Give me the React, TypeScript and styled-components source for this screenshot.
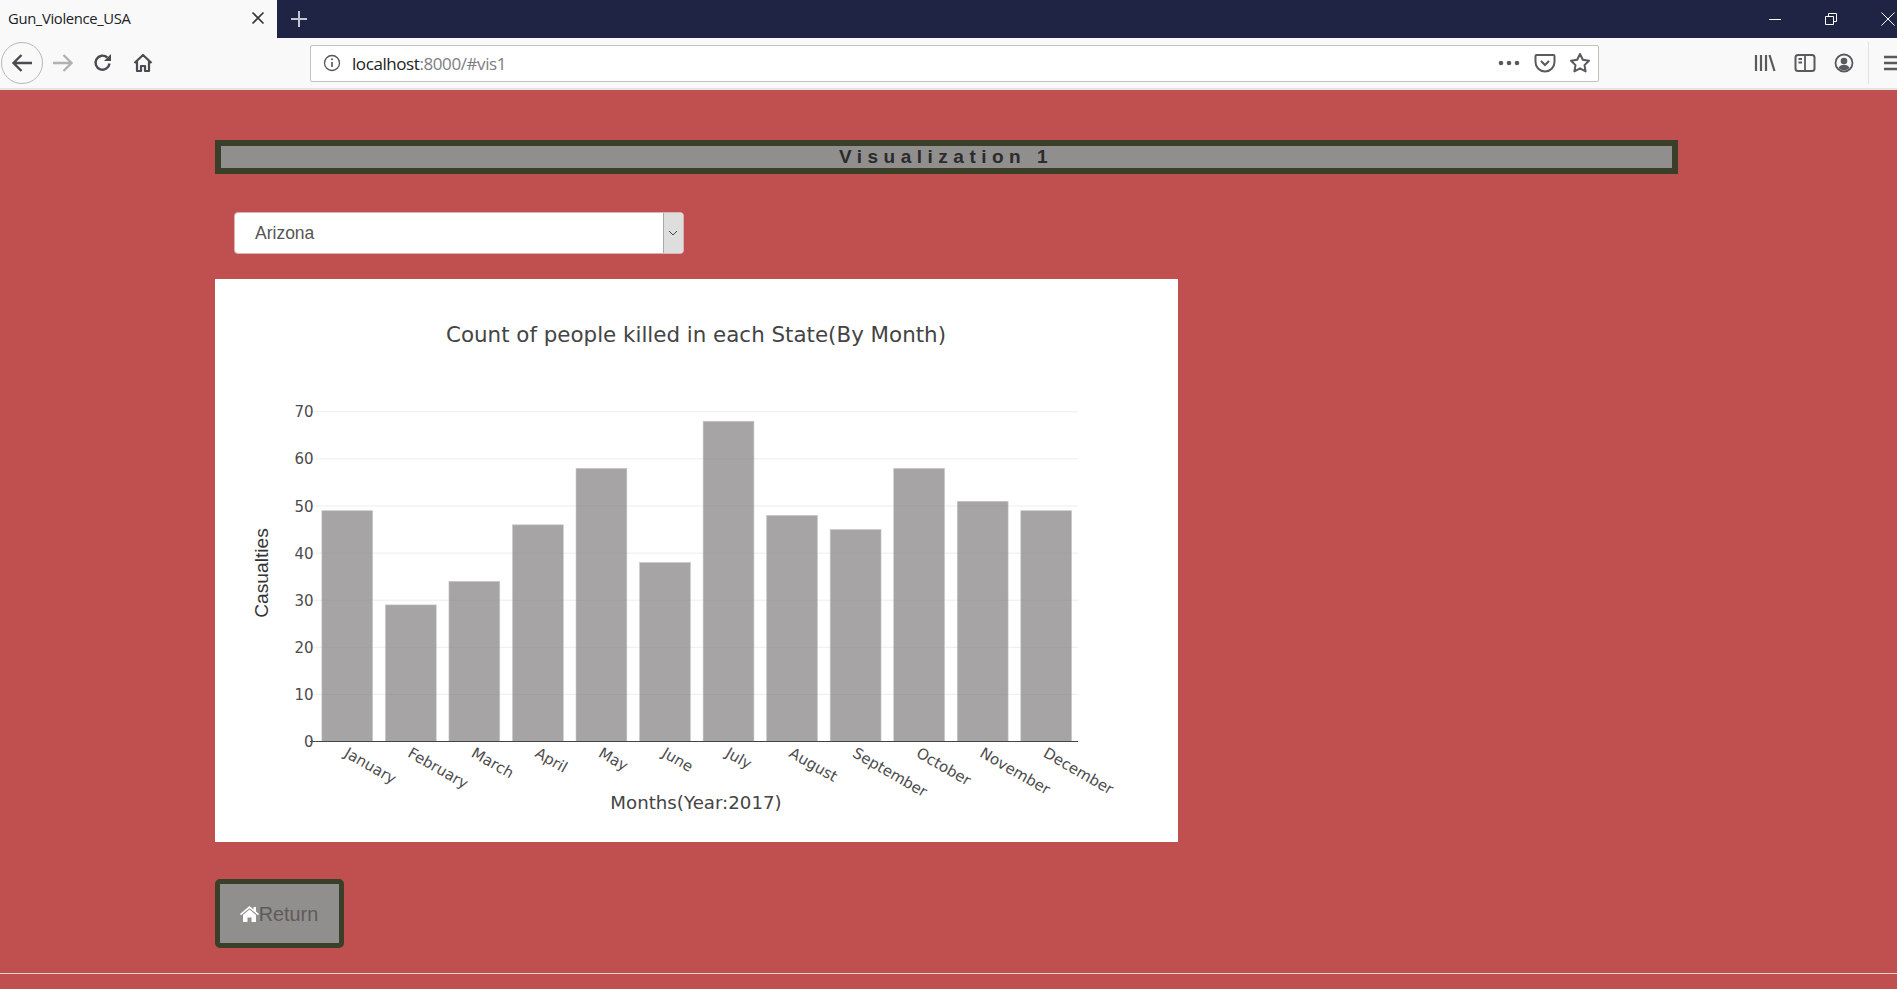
import React from "react";
import styled, { createGlobalStyle } from "styled-components";

const GlobalStyle = createGlobalStyle`
  html, body {
    margin: 0;
    padding: 0;
    height: 100%;
    overflow: hidden;
    background: #bf504f;
    font-family: "Liberation Sans", Arial, sans-serif;
  }
`;

const Window = styled.div`
  width: 1897px;
  height: 989px;
  display: flex;
  flex-direction: column;
  overflow: hidden;
`;

const TabBar = styled.div`
  height: 38px;
  display: flex;
  align-items: stretch;
  background: #1f2344;
  flex: none;
`;

const Tab = styled.div`
  width: 277px;
  box-sizing: border-box;
  padding: 0 12px 2px 8px;
  display: flex;
  align-items: center;
  justify-content: space-between;
  background: #f9f9fa;
  color: #222;
  font-family: "Open Sans", sans-serif;
  font-size: 14.8px;
  letter-spacing: -0.35px;
`;

const NewTab = styled.div`
  width: 44px;
  display: flex;
  align-items: center;
  justify-content: center;
`;

const WindowControls = styled.div`
  margin-left: auto;
  display: flex;
  align-items: center;
  gap: 42px;
  padding-right: 1px;
`;

const Toolbar = styled.div`
  height: 50px;
  flex: none;
  box-sizing: border-box;
  display: flex;
  align-items: center;
  background: #f9f9fa;
  padding: 0 0 0 1px;
  overflow: hidden;

  & > * {
    flex: none;
  }
`;

const BackButton = styled.div`
  width: 42px;
  height: 42px;
  box-sizing: border-box;
  border: 1px solid #b8b8bb;
  border-radius: 50%;
  display: flex;
  align-items: center;
  justify-content: center;
`;

const NavButton = styled.div`
  width: 40px;
  height: 40px;
  display: flex;
  align-items: center;
  justify-content: center;
`;

const UrlBar = styled.div`
  width: 1289px;
  height: 37px;
  margin-left: 147px;
  box-sizing: border-box;
  display: flex;
  align-items: center;
  background: #fff;
  border: 1px solid #c4c2bc;
  border-radius: 2px;
  padding: 0 7px 0 12px;
`;

const UrlText = styled.span`
  margin-left: 11px;
  font-family: "Open Sans", sans-serif;
  font-size: 17px;
  letter-spacing: -0.42px;
  color: #222;
`;

const UrlMuted = styled.span`
  color: #7d7d80;
`;

const UrlActions = styled.div`
  margin-left: auto;
  display: flex;
  align-items: center;
  gap: 13px;
`;

const ToolGroup = styled.div`
  margin-left: 155px;
  display: flex;
  align-items: center;
  gap: 18px;
`;

const ToolDivider = styled.div`
  width: 1px;
  height: 42px;
  background: #e2e2e4;
  margin: 0 15px 0 14px;
`;

const ToolbarEdge = styled.div`
  height: 2px;
  flex: none;
  background: #e4e4e6;
`;

const Page = styled.main`
  flex: 1;
  background: #bf504f;
  display: flex;
  flex-direction: column;
`;

const Content = styled.div`
  height: 883px;
  box-sizing: border-box;
  padding: 50px 0 0 215px;
  display: flex;
  flex-direction: column;
  align-items: flex-start;
`;

const Heading = styled.h1`
  width: 1463px;
  height: 34px;
  margin: 0;
  box-sizing: border-box;
  border: 6px solid #3a3f2a;
  background: #918e8e;
  display: flex;
  align-items: center;
  justify-content: center;
  padding-right: 1px;
  color: #2b2b2b;
  font-size: 19px;
  font-weight: 700;
  letter-spacing: 5.5px;
`;

const SelectBox = styled.div`
  width: 450px;
  height: 42px;
  margin: 38px 0 25px 19px;
  box-sizing: border-box;
  display: flex;
  align-items: stretch;
  background: #fff;
  border-radius: 4px;
  overflow: hidden;
  border: 1px solid #d8b4b3;
`;

const SelectValue = styled.div`
  flex: 1;
  display: flex;
  align-items: center;
  padding-left: 20px;
  color: #555;
  font-size: 17.5px;
`;

const SelectArrow = styled.div`
  width: 20px;
  padding-right: 2px;
  box-sizing: border-box;
  display: flex;
  align-items: center;
  justify-content: center;
  background: #dedede;
  border-left: 1px solid #a9a9a9;
`;

const ChartCard = styled.section`
  width: 963px;
  height: 563px;
  background: #fff;
  flex: none;
`;

const ChartSvg = styled.svg`
  display: block;
  width: 963px;
  height: 563px;
`;

const ChartTitle = styled.text`
  font-family: "DejaVu Sans", Verdana, sans-serif;
  font-size: 21.4px;
  fill: #444;
  text-anchor: middle;
`;

const AxisTitle = styled.text`
  font-family: "DejaVu Sans", Verdana, sans-serif;
  font-size: 18.2px;
  fill: #444;
  text-anchor: middle;
`;

const YAxisTitle = styled.text`
  font-family: "Liberation Sans", Arial, sans-serif;
  font-size: 19.2px;
  fill: #333;
  text-anchor: middle;
`;

const TickLabel = styled.text<{ $anchor: string }>`
  font-family: "DejaVu Sans", Verdana, sans-serif;
  font-size: 15px;
  fill: #4c4c4c;
  text-anchor: ${(p) => p.$anchor};
`;

const ReturnButton = styled.button`
  width: 129px;
  height: 69px;
  margin-top: 37px;
  box-sizing: border-box;
  border: 5px solid #3a3f2a;
  border-radius: 5px;
  background: #918e8e;
  display: flex;
  align-items: center;
  justify-content: center;
  padding: 1px 1px 0 0;
  color: #5f5a5c;
  font-family: "Liberation Sans", Arial, sans-serif;
  font-size: 19.8px;
`;

const Rule = styled.hr`
  width: 100%;
  height: 1px;
  margin: 0;
  border: none;
  background: #ecd3d2;
`;

const months = [
  ["January", 49],
  ["February", 29],
  ["March", 34],
  ["April", 46],
  ["May", 58],
  ["June", 38],
  ["July", 68],
  ["August", 48],
  ["September", 45],
  ["October", 58],
  ["November", 51],
  ["December", 49],
] as const;

const PLOT_LEFT = 315.5;
const PLOT_RIGHT = 1078;
const BASE_Y = 741.5;
const UNIT = 4.71;
const STEP = (PLOT_RIGHT - PLOT_LEFT) / 12;
const ticks = [0, 10, 20, 30, 40, 50, 60, 70];

const BarChart = () => (
  <ChartSvg viewBox="215 279 963 563">
    <ChartTitle x={696} y={342}>
      Count of people killed in each State(By Month)
    </ChartTitle>
    {ticks.map((t) => {
      const y = BASE_Y - t * UNIT;
      return (
        <g key={t}>
          {t > 0 && <line x1={PLOT_LEFT} x2={PLOT_RIGHT} y1={y} y2={y} stroke="#ededed" />}
          <line x1={310} x2={PLOT_LEFT} y1={y} y2={y} stroke={t === 0 ? "#444" : "#ededed"} />
          <TickLabel $anchor="end" x={313.5} y={y + 5.5}>
            {t}
          </TickLabel>
        </g>
      );
    })}
    {months.map(([name, value], i) => {
      const x = PLOT_LEFT + STEP * i + STEP * 0.1;
      const h = value * UNIT;
      const cx = PLOT_LEFT + STEP * (i + 0.5);
      return (
        <g key={name}>
          <rect
            x={x}
            y={BASE_Y - h}
            width={STEP * 0.8}
            height={h}
            fill="#807e7e"
            fillOpacity={0.7}
            stroke="#c8c8c8"
            strokeWidth={0.6}
          />
          <TickLabel $anchor="start" transform={`translate(${cx - 4} 756) rotate(30)`}>
            {name}
          </TickLabel>
        </g>
      );
    })}
    <line x1={PLOT_LEFT} x2={PLOT_RIGHT} y1={BASE_Y} y2={BASE_Y} stroke="#444" strokeWidth={1.2} />
    <AxisTitle x={696} y={808.5}>
      Months(Year:2017)
    </AxisTitle>
    <YAxisTitle transform="translate(268 573) rotate(-90)">Casualties</YAxisTitle>
  </ChartSvg>
);

const App: React.FC = () => (
  <Window>
    <GlobalStyle />
    <TabBar>
      <Tab>
        Gun_Violence_USA
        <svg width="14" height="14" viewBox="0 0 14 14">
          <path d="M1.5 1.5l11 11M12.5 1.5l-11 11" stroke="#333" strokeWidth="1.6" />
        </svg>
      </Tab>
      <NewTab>
        <svg width="18" height="18" viewBox="0 0 18 18">
          <path d="M9 1v16M1 9h16" stroke="#c3c5d3" strokeWidth="2" />
        </svg>
      </NewTab>
      <WindowControls>
        <svg width="14" height="14" viewBox="0 0 14 14">
          <path d="M1 7.5h12" stroke="#fff" />
        </svg>
        <svg width="14" height="14" viewBox="0 0 14 14">
          <path d="M1.5 4.5h8v8h-8zM4.5 4.5v-3h8v8h-3" fill="none" stroke="#fff" />
        </svg>
        <svg width="16" height="16" viewBox="0 0 16 16">
          <path d="M1.5 1.5l13 13M14.5 1.5l-13 13" stroke="#fff" />
        </svg>
      </WindowControls>
    </TabBar>
    <Toolbar>
      <BackButton>
        <svg width="22" height="20" viewBox="0 0 22 20">
          <path d="M10.5 2L2.5 10l8 8M3 10h18" fill="none" stroke="#4a4a4f" strokeWidth="2.4" />
        </svg>
      </BackButton>
      <NavButton>
        <svg width="22" height="20" viewBox="0 0 22 20">
          <path d="M11.5 2l8 8-8 8M19 10H1" fill="none" stroke="#b1b1b3" strokeWidth="2.4" />
        </svg>
      </NavButton>
      <NavButton>
        <svg width="20" height="20" viewBox="0 0 20 20">
          <path d="M16.5 10.5a7 7 0 1 1-2.2-6" fill="none" stroke="#4a4a4f" strokeWidth="2.4" />
          <path d="M18 1v7h-7z" fill="#4a4a4f" />
        </svg>
      </NavButton>
      <NavButton>
        <svg width="20" height="20" viewBox="0 0 20 20">
          <path
            d="M1.5 10L10 2l8.500 8M4 8.500V18h4v-5h4v5h4V8.500"
            fill="none"
            stroke="#4a4a4f"
            strokeWidth="2.2"
            strokeLinejoin="round"
          />
        </svg>
      </NavButton>
      <UrlBar>
        <svg width="18" height="18" viewBox="0 0 18 18">
          <circle cx="9" cy="9" r="7.500" fill="none" stroke="#55555a" strokeWidth="1.300" />
          <path d="M9 8v5" stroke="#55555a" strokeWidth="1.600" />
          <circle cx="9" cy="5.300" r="1" fill="#55555a" />
        </svg>
        <UrlText>
          localhost<UrlMuted>:8000/#vis1</UrlMuted>
        </UrlText>
        <UrlActions>
          <svg width="24" height="8" viewBox="0 0 24 8">
            <circle cx="4" cy="4" r="2.300" fill="#5a5a5e" />
            <circle cx="12" cy="4" r="2.300" fill="#5a5a5e" />
            <circle cx="20" cy="4" r="2.300" fill="#5a5a5e" />
          </svg>
          <svg width="22" height="20" viewBox="0 0 22 20">
            <path
              d="M2.500 2h17a1 1 0 0 1 1 1v6a9.500 9.500 0 0 1-19 0V3a1 1 0 0 1 1-1z"
              fill="none"
              stroke="#5a5a5e"
              strokeWidth="2"
            />
            <path d="M7 8l4 4 4-4" fill="none" stroke="#5a5a5e" strokeWidth="2" />
          </svg>
          <svg width="22" height="22" viewBox="0 0 22 22">
            <path
              d="M11 2l2.800 5.800 6.200.900-4.500 4.400 1.100 6.300L11 16.400l-5.600 3 1.100-6.300L2 8.700l6.200-.900z"
              fill="none"
              stroke="#5a5a5e"
              strokeWidth="2"
              strokeLinejoin="round"
            />
          </svg>
        </UrlActions>
      </UrlBar>
      <ToolGroup>
        <svg width="22" height="20" viewBox="0 0 22 20">
          <path d="M2 2v16M7 2v16M12 2v16M15.500 2l5 16" stroke="#5a5a5e" strokeWidth="2.200" />
        </svg>
        <svg width="22" height="20" viewBox="0 0 22 20">
          <rect x="1.500" y="2" width="19" height="16" rx="2.500" fill="none" stroke="#5a5a5e" strokeWidth="2" />
          <path d="M11 2v16M4.500 6h3.500M4.500 9.500h3.500" stroke="#5a5a5e" strokeWidth="1.800" />
        </svg>
        <svg width="20" height="20" viewBox="0 0 20 20">
          <circle cx="10" cy="10" r="8.500" fill="none" stroke="#5a5a5e" strokeWidth="1.800" />
          <circle cx="10" cy="8" r="3.300" fill="#5a5a5e" />
          <path d="M4.500 15c1-2.500 3-3.300 5.500-3.300s4.500.800 5.500 3.300a8 8 0 0 1-11 0z" fill="#5a5a5e" />
        </svg>
      </ToolGroup>
      <ToolDivider />
      <svg width="16" height="18" viewBox="0 0 16 18">
        <path d="M0 3h16M0 9h16M0 15h16" stroke="#5a5a5e" strokeWidth="2.400" />
      </svg>
    </Toolbar>
    <ToolbarEdge />
    <Page>
      <Content>
        <Heading>Visualization 1</Heading>
        <SelectBox>
          <SelectValue>Arizona</SelectValue>
          <SelectArrow>
            <svg width="10" height="6" viewBox="0 0 10 6">
              <path d="M1 1l4 4 4-4" fill="none" stroke="#444" />
            </svg>
          </SelectArrow>
        </SelectBox>
        <ChartCard>
          <BarChart />
        </ChartCard>
        <ReturnButton>
          <svg width="19" height="16" viewBox="0 0 19 16">
            <path d="M9.500 0L0 8l1 1.200L9.500 2.200 18 9.200 19 8l-3-2.500V1h-2.500v2.400z" fill="#fff" />
            <path d="M9.500 3.500L3 9v7h4.500v-4.500h4V16H16V9z" fill="#fff" />
          </svg>
          Return
        </ReturnButton>
      </Content>
      <Rule />
    </Page>
  </Window>
);

export default App;
